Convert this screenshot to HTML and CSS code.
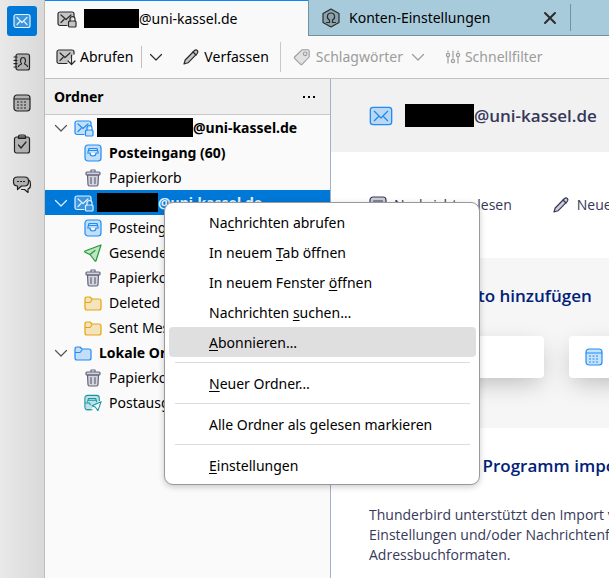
FILE: index.html
```html
<!DOCTYPE html>
<html lang="de">
<head>
    <title>Konten-Einstellungen</title>
    <meta charset="UTF-8" />
    <meta name="viewport" content="width=device-width, initial-scale=1.0" />
    <link rel="stylesheet" href="styles.css">
</head>
<body>
    <!-- Icon set -->
    <svg class="sprite" aria-hidden="true">
        <symbol id="mail" viewBox="0 0 18 18">
            <rect class="tint" x="1" y="2.500" width="16" height="13" rx="2"/>
            <path d="M4 5.500l5 5 5-5M4 12.500l3-3M14 12.500l-3-3"/>
        </symbol>
        <symbol id="mail-lock" viewBox="0 0 20 18">
            <path class="tint" d="M10 15.500H3a2 2 0 0 1-2-2V4a2 2 0 0 1 2-2h12a2 2 0 0 1 2 2v3"/>
            <path d="M4 5l5 4.500 5-4.500M4 12.500l3-3"/>
            <path d="M13 11V9a2.500 2.500 0 0 1 5 0v2"/>
            <rect class="tint" x="11.500" y="11" width="7.500" height="6" rx="1"/>
        </symbol>
        <symbol id="mail-get" viewBox="0 0 20 18">
            <path class="tint" d="M11 15.500H3a2 2 0 0 1-2-2V4a2 2 0 0 1 2-2h13a2 2 0 0 1 2 2v2"/>
            <path d="M4 5l5 4.500 5-4.500M4 12.500l3-3M15.500 7v9M12 13l3.500 3.500L19 13"/>
        </symbol>
        <symbol id="book" viewBox="0 0 18 18">
            <rect class="tint" x="3" y="1" width="13.500" height="16" rx="2"/>
            <path d="M1 4h3M1 7.300h3M1 10.600h3M1 14h3"/>
            <path d="M5.500 13.500c0-2 3-1.500 3-3C7 9.500 7 4.500 10 4.500s3 5 1.500 6c0 1.500 3 1 3 3"/>
        </symbol>
        <symbol id="calendar" viewBox="0 0 18 18">
            <rect class="tint" x="1" y="1" width="16" height="16" rx="3"/>
            <path d="M1.500 5h15"/>
            <path stroke-linecap="butt" stroke-dasharray="2 1.500" d="M4 8h10M4 11h10M4 14h10"/>
        </symbol>
        <symbol id="tasks" viewBox="0 0 18 20">
            <rect class="tint" x="1.500" y="3" width="15" height="16" rx="2"/>
            <path class="tint" d="M5.500 4.500V2.500Q5.500 1 7 1h4q1.500 0 1.500 1.500v2z"/>
            <path d="M5.500 11l2.500 3L13 8"/>
        </symbol>
        <symbol id="chat" viewBox="0 0 19 18">
            <path class="tint" d="M5 1h7q4 0 4 3.500v1.500q0 4-4 4H9l-4 3.500V10Q1 10 1 6V4.500Q1 1 5 1z"/>
            <path d="M17 4.500q1 1 1 4.500 0 3.500-2.500 4v3.500L12 13.500H9"/>
            <path stroke-linecap="butt" stroke-dasharray="2 1" d="M4.500 5.500h8"/>
        </symbol>
        <symbol id="pencil" viewBox="0 0 18 18">
            <path class="tint" d="M2 16l1.200-4L12.500 2.500q1.500-1.300 2.800 0t0 2.800L6 14.800z"/>
            <path d="M11 4l3 3"/>
        </symbol>
        <symbol id="tag" viewBox="0 0 20 20">
            <path class="tint" d="M10 2h6.500Q18 2 18 3.500V10l-8 8.300q-.7.500-1.500 0L1.700 11.500q-.5-.7 0-1.500z"/>
            <circle cx="13.500" cy="6.500" r="2"/>
        </symbol>
        <symbol id="filter" viewBox="0 0 16 16">
            <path d="M3 2v1M3 8v6M8 2v7M13 2v1M13 8v6"/>
            <circle cx="3" cy="6" r="1.600"/><circle cx="8" cy="12" r="1.600"/><circle cx="13" cy="6" r="1.600"/>
        </symbol>
        <symbol id="account" viewBox="0 0 20 20">
            <path class="tint" d="M10 1l8 4.500v9L10 19l-8-4.500v-9z"/>
            <path d="M5.500 14.500h3V12C5.500 11 5.500 5 10 5s4.500 6 1.500 7v2.500h3"/>
        </symbol>
        <symbol id="chevron" viewBox="0 0 14 14">
            <path d="M1.500 4.500L7 10l5.500-5.500"/>
        </symbol>
        <symbol id="close" viewBox="0 0 14 14">
            <path d="M2 2l10 10M12 2L2 12"/>
        </symbol>
        <symbol id="inbox" viewBox="0 0 18 18">
            <rect class="tint" x="1" y="1" width="16" height="16" rx="3"/>
            <path d="M4 8l1-3.500h8L14 8M5.500 6.500h7"/>
            <path class="paper" d="M3.500 9H6q0 3 3 3t3-3h2.500"/>
        </symbol>
        <symbol id="trash" viewBox="0 0 18 18">
            <path class="tint" d="M3.500 6l.5 9.500Q4 17 5.500 17h7q1.500 0 1.500-1.500L14.500 6z"/>
            <rect class="tint" x="2" y="3" width="14" height="3" rx="1"/>
            <path d="M7 2.500V1h4v1.500M7 8.500v6M11 8.500v6"/>
        </symbol>
        <symbol id="sent" viewBox="0 0 18 18">
            <path class="tint" d="M17 1L1 7q-.7.500 0 1.200L6 10.500 11 17q.7.500 1-.3z"/>
            <path d="M6 10.500l5-4"/>
        </symbol>
        <symbol id="folder" viewBox="0 0 18 18">
            <path class="tint" d="M1 5q0-2 2-2h3l2 2h7q2 0 2 2v7q0 2-2 2H3q-2 0-2-2z"/>
            <path d="M1.500 8.500h4.500l2-2.500"/>
        </symbol>
        <symbol id="outbox" viewBox="0 0 20 19">
            <path class="tint" d="M7 17H4q-3 0-3-3V4q0-3 3-3h10q3 0 3 3v3"/>
            <path d="M4 8l1-3.500h8L14 8M5.500 6.500h7M1.500 9.500H6l1 2M3.500 17H9"/>
            <path class="paper" d="M19 8l-10 4.500 3.500 1.500 3 4z"/>
        </symbol>
        <symbol id="read" viewBox="0 0 18 18">
            <rect class="tint" x="1" y="1" width="16" height="16" rx="3"/>
            <path d="M4.500 5h9M4.500 8h9"/>
        </symbol>
    </svg>

    <nav class="spaces" aria-label="Bereiche">
        <button class="space active" aria-label="E-Mail"><svg class="icon"><use href="#mail"/></svg></button>
        <button class="space" aria-label="Adressbuch"><svg class="icon"><use href="#book"/></svg></button>
        <button class="space" aria-label="Kalender"><svg class="icon"><use href="#calendar"/></svg></button>
        <button class="space" aria-label="Aufgaben"><svg class="icon tall"><use href="#tasks"/></svg></button>
        <button class="space" aria-label="Chat"><svg class="icon wide"><use href="#chat"/></svg></button>
    </nav>

    <div class="window">
        <div class="tabs" role="tablist">
            <button class="tab current" role="tab" aria-selected="true">
                <svg class="icon wide"><use href="#mail-lock"/></svg>
                <span class="address"><span class="redacted short"></span>@uni-kassel.de</span>
            </button>
            <div class="tab other">
                <button class="tab-label" role="tab" aria-selected="false">
                    <svg class="icon wide"><use href="#account"/></svg>
                    Konten-Einstellungen
                </button>
                <button class="tab-close" aria-label="Schließen"><svg class="icon bold"><use href="#close"/></svg></button>
            </div>
        </div>

        <div class="toolbar">
            <button class="tool"><svg class="icon wide"><use href="#mail-get"/></svg>Abrufen</button>
            <button class="tool split" aria-label="Abrufen: Auswahl"><svg class="chevron"><use href="#chevron"/></svg></button>
            <button class="tool write"><svg class="icon"><use href="#pencil"/></svg>Verfassen</button>
            <span class="divider"></span>
            <button class="tool" disabled><svg class="icon wide"><use href="#tag"/></svg>Schlagwörter<svg class="chevron"><use href="#chevron"/></svg></button>
            <button class="tool quick" disabled><svg class="icon small"><use href="#filter"/></svg>Schnellfilter</button>
        </div>

        <div class="panes">
            <aside class="folders">
                <div class="folders-header">
                    <h2>Ordner</h2>
                    <button class="more" aria-label="Optionen"><i></i><i></i><i></i></button>
                </div>
                <ul class="tree">
                    <li class="row account">
                        <svg class="chevron"><use href="#chevron"/></svg>
                        <svg class="icon wide blue"><use href="#mail-lock"/></svg>
                        <span class="address"><span class="redacted long"></span>@uni-kassel.de</span>
                    </li>
                    <li class="row unread"><svg class="icon blue"><use href="#inbox"/></svg>Posteingang (60)</li>
                    <li class="row"><svg class="icon slate"><use href="#trash"/></svg>Papierkorb</li>
                    <li class="row account selected">
                        <svg class="chevron"><use href="#chevron"/></svg>
                        <svg class="icon wide"><use href="#mail-lock"/></svg>
                        <span class="address"><span class="redacted medium"></span>@uni-kassel.de</span>
                    </li>
                    <li class="row"><svg class="icon blue"><use href="#inbox"/></svg>Posteingang</li>
                    <li class="row"><svg class="icon green"><use href="#sent"/></svg>Gesendet</li>
                    <li class="row"><svg class="icon slate"><use href="#trash"/></svg>Papierkorb</li>
                    <li class="row"><svg class="icon yellow"><use href="#folder"/></svg>Deleted Items</li>
                    <li class="row"><svg class="icon yellow"><use href="#folder"/></svg>Sent Messages</li>
                    <li class="row account">
                        <svg class="chevron"><use href="#chevron"/></svg>
                        <svg class="icon blue"><use href="#folder"/></svg>
                        <span class="local">Lokale Ordner</span>
                    </li>
                    <li class="row"><svg class="icon slate"><use href="#trash"/></svg>Papierkorb</li>
                    <li class="row"><svg class="icon teal"><use href="#outbox"/></svg>Postausgang</li>
                </ul>
            </aside>

            <main class="central">
                <header class="account-header">
                    <svg class="icon large blue"><use href="#mail"/></svg>
                    <h1 class="address"><span class="redacted title"></span>@uni-kassel.de</h1>
                </header>
                <div class="actions">
                    <a href="#lesen"><svg class="icon"><use href="#read"/></svg>Nachrichten lesen</a>
                    <a href="#neu"><svg class="icon"><use href="#pencil"/></svg>Neue Nachricht</a>
                </div>
                <section class="setup">
                    <h2>Weiteres Konto hinzufügen</h2>
                    <div class="cards">
                        <button class="card"><svg class="icon blue"><use href="#mail"/></svg>E-Mail</button>
                        <button class="card" aria-label="Kalender"><svg class="icon blue"><use href="#calendar"/></svg></button>
                    </div>
                </section>
                <section class="import">
                    <h2>Aus anderem Programm importieren</h2>
                    <p>Thunderbird unterstützt den Import von E-Mails,<br>
                    Einstellungen und/oder Nachrichtenfiltern in<br>
                    Adressbuchformaten.</p>
                </section>
            </main>
        </div>
    </div>

    <div class="menu" role="menu">
        <button role="menuitem">Na<u>c</u>hrichten abrufen</button>
        <button role="menuitem">In neuem <u>T</u>ab öffnen</button>
        <button role="menuitem">In neuem Fenster <u>ö</u>ffnen</button>
        <button role="menuitem">Nachrichten <u>s</u>uchen…</button>
        <button role="menuitem" class="hover"><u>A</u>bonnieren…</button>
        <hr>
        <button role="menuitem"><u>N</u>euer Ordner…</button>
        <hr>
        <button role="menuitem">Alle Ordner als gelesen markieren</button>
        <hr>
        <button role="menuitem"><u>E</u>instellungen</button>
    </div>
</body>
</html>
```

FILE: styles.css
```css
* {
    margin: 0;
    padding: 0;
    box-sizing: border-box;
}

body {
    display: flex;
    height: 100vh;
    overflow: hidden;
    font-family: "Noto Sans", "Open Sans", sans-serif;
    font-size: 14px;
    line-height: 20px;
    color: #000;
    background: #fafafa;
}

button {
    font: inherit;
    color: inherit;
    background: none;
    border: none;
    white-space: nowrap;
}

a {
    color: inherit;
    text-decoration: none;
}

/* Icons */
.sprite {
    position: absolute;
    width: 0;
    height: 0;
}

.icon {
    flex: none;
    width: 18px;
    height: 18px;
}

.icon,
.chevron {
    fill: none;
    stroke: currentColor;
    stroke-width: 1.2;
    stroke-linecap: round;
    stroke-linejoin: round;
}

.icon.wide {
    width: 20px;
}

.icon.tall {
    height: 20px;
}

.icon.small {
    width: 16px;
}

.icon.large {
    width: 24px;
    height: 24px;
    stroke-width: 1;
}

.icon.bold {
    width: 14px;
    height: 14px;
    stroke-width: 2;
}

.chevron {
    flex: none;
    width: 14px;
    height: 14px;
}

.tint {
    fill: currentColor;
    fill-opacity: 0.25;
}

.paper {
    fill: #fafafa;
}

.blue { color: #1f8df5; }
.slate { color: #62627f; }
.green { color: #1d9a31; }
.yellow { color: #e5a50a; }
.teal { color: #1597a5; }

.tab .icon,
.tool:enabled .icon,
.tool:enabled .chevron {
    color: #2b2b2b;
}

/* Blacked-out part of an address */
.address {
    display: flex;
    align-items: center;
}

.redacted {
    height: 19px;
    background: #000;
}

.redacted.short { width: 55px; }
.redacted.medium { width: 61px; }
.redacted.long { width: 96px; }
.redacted.title { width: 69px; height: 23px; }

/* Spaces bar */
.spaces {
    display: flex;
    flex: none;
    flex-direction: column;
    align-items: center;
    gap: 11px;
    width: 45px;
    padding-top: 6px;
    background: linear-gradient(to right, #e9e9e9, #d9d9d9);
    border-right: 1px solid #bcbcbc;
}

.space {
    display: flex;
    align-items: center;
    justify-content: center;
    width: 30px;
    height: 30px;
    border-radius: 3px;
    color: #222;
}

.space.active {
    color: #e4f1fd;
    background: #0078d7;
}

/* Tabs */
.window {
    display: flex;
    flex: 1;
    flex-direction: column;
    min-width: 0;
}

.tabs {
    display: flex;
    height: 36px;
    background: #a8cbdb;
}

.tab {
    display: flex;
    flex: 0 1 263px;
    align-items: center;
    gap: 8px;
    padding: 0 12px;
}

.tab.current {
    gap: 7px;
    background: #f9f9f9;
    border-top: 1px solid #0a84ff;
}

.tabs::after {
    content: "";
    flex: 1;
    border-bottom: 1px solid #7790a0;
}

.tab.other {
    position: relative;
    justify-content: space-between;
    padding-right: 14px;
    border-left: 1px solid #7790a0;
    border-bottom: 1px solid #7790a0;
}

.tab.other::after {
    content: "";
    position: absolute;
    top: 4px;
    right: 0;
    bottom: 4px;
    border-right: 1px solid #7790a0;
}

.tab-label {
    display: flex;
    align-items: center;
    gap: 8px;
}

.tab-label .icon {
    height: 20px;
}

.tab-close {
    display: flex;
}

/* Toolbar */
.toolbar {
    display: flex;
    flex: none;
    align-items: center;
    height: 43px;
    padding-left: 11px;
    background: #f9f9f9;
    border-bottom: 1px solid #c2c2c2;
}

.tool {
    display: flex;
    align-items: center;
    gap: 4px;
}

.tool:disabled {
    color: #9c9c9c;
}

.tool .chevron {
    margin-left: 4px;
}

.tool.split {
    height: 22px;
    margin-left: 8px;
    border-left: 1px solid #c0c0c0;
}

.tool.split .chevron {
    margin-left: 7px;
}

.tool.write {
    margin-left: 19px;
}

.tool.quick {
    margin-left: 20px;
}

.divider {
    width: 1px;
    height: 30px;
    margin: 0 11px;
    background: #c8c8c8;
}

/* Folder pane */
.panes {
    display: flex;
    flex: 1;
    min-height: 0;
}

.folders {
    flex: 0 0 286px;
    border-right: 1px solid #a3b0c8;
}

.folders-header {
    display: flex;
    align-items: center;
    justify-content: space-between;
    height: 36px;
    padding: 0 15px 0 9px;
    background: #efefef;
    border-bottom: 1px solid #c8c8c8;
}

.folders-header h2 {
    font-size: 14px;
    font-weight: 700;
}

.more {
    display: flex;
    gap: 3px;
}

.more i {
    width: 2px;
    height: 2px;
    background: #000;
}

.tree {
    list-style: none;
}

.row {
    display: flex;
    align-items: center;
    gap: 7px;
    height: 25px;
    padding-left: 39px;
    white-space: nowrap;
}

.row.account {
    gap: 3px;
    padding-left: 9px;
    font-weight: 700;
}

.row.account .chevron {
    margin-right: 3px;
    color: #555;
}

.row.unread {
    font-weight: 700;
}

.row .local {
    padding-left: 4px;
}

.row.selected,
.row.selected .chevron {
    color: #e4f1fd;
}

.row.selected {
    background: #0078d7;
}

/* Account central */
.central {
    flex: 1;
    min-width: 0;
    overflow: hidden;
    font-family: "Open Sans", "Noto Sans", sans-serif;
    color: #36385a;
    white-space: nowrap;
    background: #fff;
}

.account-header {
    display: flex;
    align-items: center;
    gap: 12px;
    height: 73px;
    padding-left: 38px;
    background: #f1f1f1;
}

.account-header h1 {
    font-size: 17px;
    font-weight: 600;
}

.actions {
    display: flex;
    align-items: center;
    gap: 40px;
    height: 106px;
    padding-left: 38px;
}

.actions a {
    display: flex;
    flex: none;
    align-items: center;
    gap: 7px;
}

.central h2 {
    font-size: 17px;
    font-weight: 600;
    line-height: 24px;
    color: #00217a;
}

.setup {
    height: 170px;
    padding: 26px 0 0 38px;
    background: #f6f6f6;
}

.cards {
    display: flex;
    gap: 25px;
    margin-top: 28px;
}

.card {
    display: flex;
    flex: none;
    align-items: center;
    gap: 10px;
    width: 175px;
    height: 42px;
    padding: 0 16px;
    border-radius: 4px;
    background: #fff;
    box-shadow: 0 8px 24px -4px rgba(0, 0, 0, 0.25);
}

.import {
    padding: 26px 0 0 38px;
}

.import p {
    margin: 27px 0 20px;
}

/* Context menu */
.menu {
    position: absolute;
    top: 202px;
    left: 164px;
    width: 316px;
    padding: 4px 3px 4px 4px;
    background: #fff;
    border: 1px solid #999;
    border-radius: 9px;
    box-shadow: 0 2px 6px rgba(0, 0, 0, 0.2);
}

.menu button {
    display: block;
    width: 100%;
    height: 30px;
    padding: 2px 0 0 40px;
    border-radius: 4px;
    text-align: left;
}

.menu button.hover {
    background: #dfdfdf;
}

.menu u {
    text-underline-offset: 2px;
}

.menu hr {
    margin: 5px 6px;
    border: none;
    border-top: 1px solid #dcdcdc;
}
```
